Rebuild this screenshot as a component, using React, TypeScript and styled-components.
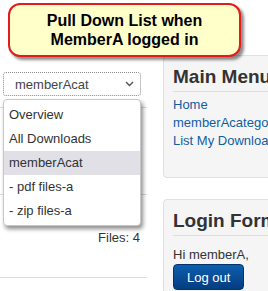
import React from 'react'
import styled, { createGlobalStyle } from 'styled-components'

const GlobalStyle = createGlobalStyle`
  html, body {
    margin: 0;
    padding: 0;
    overflow: hidden;
    background: #fff;
  }
  body {
    font-family: 'Liberation Sans', Arial, sans-serif;
    font-size: 13px;
    color: #333;
  }
`

const Page = styled.div`
  position: relative;
  width: 268px;
  height: 291px;
  overflow: hidden;
  display: grid;
  grid-template-columns: 147px 160px;
  column-gap: 16px;
  align-items: start;
`

// ---- left column (category page with the open select) ----

const LeftCol = styled.div`
  position: relative;
  padding-top: 72px;
`

const SelectBox = styled.div`
  margin-left: 3px;
  width: 138px;
  height: 24px;
  box-sizing: border-box;
  border: 1px dotted #8c8c8c;
  border-radius: 3px;
  display: flex;
  align-items: center;
  justify-content: space-between;
  padding: 0 6px 0 11px;
  color: #444;
  font-size: 13px;
`

const Table = styled.div`
  margin-top: 11px;
  border-bottom: 1px solid #ddd;
`

const Row = styled.div<{ $height: number }>`
  height: ${({ $height }) => $height}px;
  box-sizing: border-box;
  border-top: 1px solid #ddd;
`

const FilesCount = styled.div`
  padding-top: 35px;
  padding-right: 7px;
  text-align: right;
  line-height: 16px;
  color: #333;
`

const DropList = styled.ul`
  position: absolute;
  top: 99px;
  left: 3px;
  width: 138px;
  box-sizing: border-box;
  margin: 0;
  padding: 3px 0 2px;
  list-style: none;
  background: #fff;
  border: 1px solid #c8c8c8;
  border-radius: 4px;
  box-shadow: 2px 3px 4px rgba(0, 0, 0, 0.45);
`

const DropItem = styled.li<{ $active?: boolean }>`
  height: 24px;
  line-height: 24px;
  padding-left: 5px;
  color: #333;
  background: ${({ $active }) => ($active ? '#e0e0e6' : 'transparent')};
`

// ---- right column (modules) ----

const RightCol = styled.div`
  padding-top: 55px;
  display: flex;
  flex-direction: column;
  gap: 21px;
`

const Panel = styled.div<{ $padBottom: number }>`
  background: #f5f5f5;
  border: 1px solid #e0e0e0;
  border-radius: 4px;
  padding: 10px 0 ${({ $padBottom }) => $padBottom}px 9px;
`

const PanelTitle = styled.h3`
  margin: 0;
  font-size: 19px;
  font-weight: 700;
  line-height: 22px;
  color: #333;
  padding-bottom: 3px;
  border-bottom: 1px solid #ddd;
  white-space: nowrap;
`

const MenuList = styled.ul`
  margin: 4px 0 0;
  padding: 0;
  list-style: none;
`

const MenuLink = styled.li`
  line-height: 18px;
  color: #115ea3;
  white-space: nowrap;
`

const Greeting = styled.div`
  margin-top: 10px;
  line-height: 18px;
  color: #333;
`

const LogoutButton = styled.button`
  height: 26px;
  padding: 0 13px;
  font-family: 'Liberation Sans', Arial, sans-serif;
  font-size: 13px;
  color: #fff;
  border: 1px solid #04336b;
  border-radius: 4px;
  background: linear-gradient(to bottom, #0d5fae, #053c80);
`

// ---- annotation callout lying over the page ----

const Callout = styled.div`
  position: absolute;
  left: 8px;
  top: 3px;
  width: 233px;
  height: 54px;
  box-sizing: border-box;
  border: 2px solid #e41b1b;
  border-radius: 12px;
  background: #ffffc9;
  box-shadow: 3px 3px 3px rgba(0, 0, 0, 0.45);
  display: flex;
  flex-direction: column;
  align-items: center;
  justify-content: center;
  font-size: 16px;
  font-weight: 700;
  line-height: 19px;
  color: #000;
  text-align: center;
`

const Chevron = () => (
  <svg width="9" height="6" viewBox="0 0 9 6">
    <path d="M1 1 L4.5 4.5 L8 1" fill="none" stroke="#555" strokeWidth="1.4" />
  </svg>
)

const options = ['Overview', 'All Downloads', 'memberAcat', '- pdf files-a', '- zip files-a']

export default function App() {
  return (
    <>
      <GlobalStyle />
      <Page>
        <LeftCol>
          <SelectBox>
            <span>memberAcat</span>
            <Chevron />
          </SelectBox>
          <Table>
            <Row $height={87} />
            <Row $height={83}>
              <FilesCount>Files: 4</FilesCount>
            </Row>
          </Table>
          <DropList>
            {options.map((o) => (
              <DropItem key={o} $active={o === 'memberAcat'}>
                {o}
              </DropItem>
            ))}
          </DropList>
        </LeftCol>

        <RightCol>
          <Panel $padBottom={27}>
            <PanelTitle>Main Menu</PanelTitle>
            <MenuList>
              <MenuLink>Home</MenuLink>
              <MenuLink>memberAcategory</MenuLink>
              <MenuLink>List My Downloads</MenuLink>
            </MenuList>
          </Panel>
          <Panel $padBottom={20}>
            <PanelTitle>Login Form</PanelTitle>
            <Greeting>Hi memberA,</Greeting>
            <LogoutButton>Log out</LogoutButton>
          </Panel>
        </RightCol>

        <Callout>
          <div>Pull Down List when</div>
          <div>MemberA logged in</div>
        </Callout>
      </Page>
    </>
  )
}
